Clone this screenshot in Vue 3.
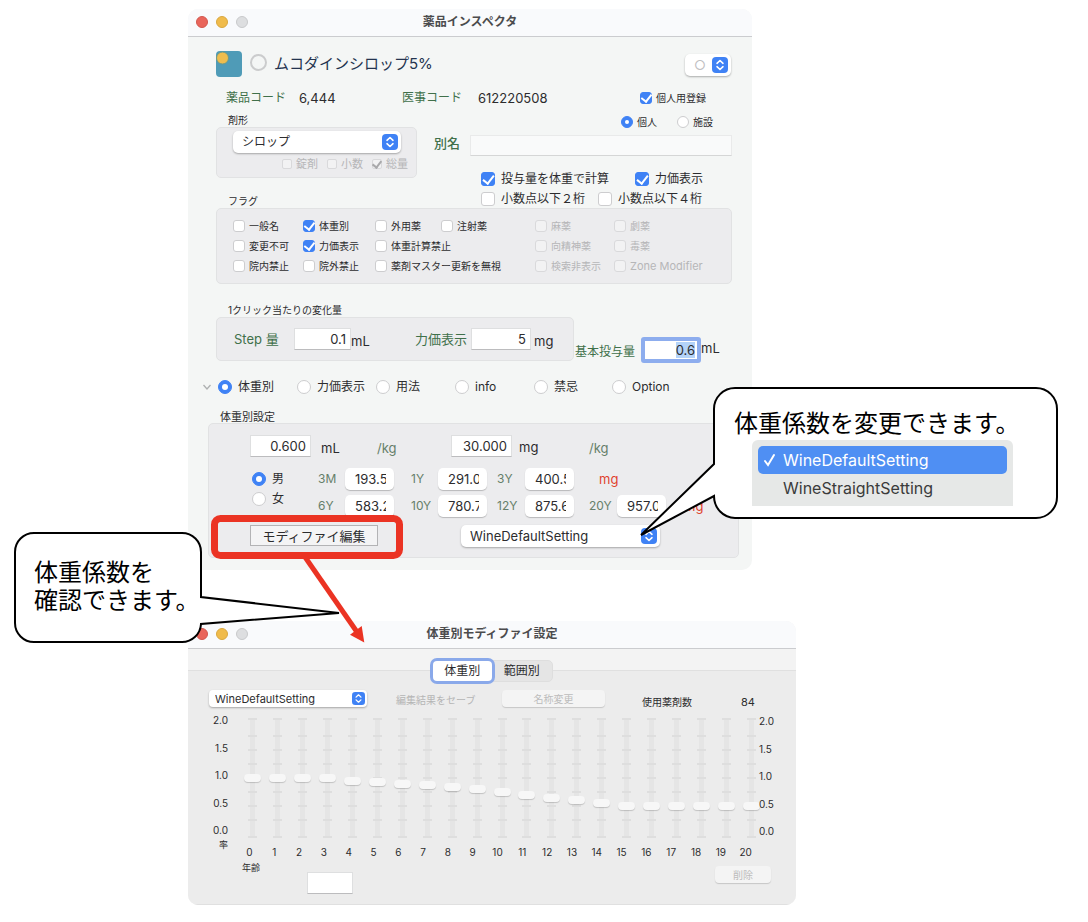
<script setup>
import { ref } from 'vue'

const flags = ref([
  { label: '一般名', col: 1, row: 1 },
  { label: '体重別', col: 2, row: 1, on: true },
  { label: '外用薬', col: 3, row: 1 },
  { label: '注射薬', col: 4, row: 1 },
  { label: '麻薬', col: 5, row: 1, off: true },
  { label: '劇薬', col: 6, row: 1, off: true },
  { label: '変更不可', col: 1, row: 2 },
  { label: '力価表示', col: 2, row: 2, on: true },
  { label: '体重計算禁止', col: 3, row: 2 },
  { label: '向精神薬', col: 5, row: 2, off: true },
  { label: '毒薬', col: 6, row: 2, off: true },
  { label: '院内禁止', col: 1, row: 3 },
  { label: '院外禁止', col: 2, row: 3 },
  { label: '薬剤マスター更新を無視', col: 3, row: 3 },
  { label: '検索非表示', col: 5, row: 3, off: true },
  { label: 'Zone Modifier', col: 6, row: 3, off: true, latin: true },
])

const forms = [
  { label: '錠剤', on: false },
  { label: '小数', on: false },
  { label: '総量', on: true },
]

const panes = ['体重別', '力価表示', '用法', 'info', '禁忌', 'Option']
const pane = ref('体重別')
const owner = ref('個人')
const sex = ref('男')

const doses = [
  { age: '3M', value: '193.5' },
  { age: '1Y', value: '291.0' },
  { age: '3Y', value: '400.5' },
  { age: '6Y', value: '583.2' },
  { age: '10Y', value: '780.7' },
  { age: '12Y', value: '875.6' },
  { age: '20Y', value: '957.0' },
]
const firstDoses = doses.slice(0, 3)
const laterDoses = doses.slice(3)

const axis = ['2.0', '1.5', '1.0', '0.5', '0.0']
const ticks = [1, 18, 32, 46, 60, 74, 88, 102, 119]
const rates = ref([
  1, 1, 1, 1, 0.95, 0.93, 0.89, 0.88, 0.84, 0.8, 0.75, 0.7, 0.64, 0.61, 0.55,
  0.5, 0.5, 0.5, 0.5, 0.5, 0.5,
])
</script>

<template>
  <main class="desktop">
    <section class="window inspector">
      <header class="titlebar">
        <span class="lights"><i class="red"></i><i class="yellow"></i><i></i></span>
        <h1>薬品インスペクタ</h1>
      </header>

      <div class="drug">
        <svg class="drug-icon" width="26" height="26" viewBox="0 0 26 26" aria-hidden="true">
          <rect width="26" height="26" rx="4" fill="#4f9bb7" />
          <circle cx="6.5" cy="7" r="6" fill="#efbd4e" stroke="#6f9a86" stroke-width="1" />
        </svg>
        <span class="ring"></span>
        <h2>ムコダインシロップ5%</h2>
        <span class="pop pop-mark">
          <select aria-label="マーク"><option>○</option></select>
          <svg class="arrows" viewBox="0 0 16 16"><rect width="16" height="16" rx="4" /><path d="M5 6.300 8 3.500l3 2.800M5 9.700l3 2.800 3-2.800" /></svg>
        </span>
      </div>

      <div class="codes">
        <span class="green">薬品コード</span><span class="num">6,444</span>
        <span class="green">医事コード</span><span class="num">612220508</span>
        <label class="check tiny"><input type="checkbox" checked />個人用登録</label>
      </div>

      <div class="middle">
        <div class="form-side">
          <p class="caption">剤形</p>
          <div class="group form-group">
            <span class="pop pop-form">
              <select aria-label="剤形"><option>シロップ</option></select>
              <svg class="arrows" viewBox="0 0 16 16"><rect width="16" height="16" rx="4" /><path d="M5 6.300 8 3.500l3 2.800M5 9.700l3 2.800 3-2.800" /></svg>
            </span>
            <div class="form-checks">
              <label v-for="f in forms" :key="f.label" class="check mini">
                <input type="checkbox" :checked="f.on" disabled />{{ f.label }}
              </label>
            </div>
          </div>
          <p class="caption flag-caption">フラグ</p>
        </div>
        <div class="alias-side">
          <div class="owners">
            <label v-for="o in ['個人', '施設']" :key="o" class="check tiny">
              <input v-model="owner" type="radio" name="owner" :value="o" />{{ o }}
            </label>
          </div>
          <div class="alias">
            <label class="green" for="alias">別名</label>
            <input id="alias" class="field" type="text" />
          </div>
          <div class="options">
            <label class="check big"><input type="checkbox" checked />投与量を体重で計算</label>
            <label class="check big"><input type="checkbox" checked />力価表示</label>
          </div>
          <div class="options digits">
            <label class="check big"><input type="checkbox" />小数点以下２桁</label>
            <label class="check big"><input type="checkbox" />小数点以下４桁</label>
          </div>
        </div>
      </div>

      <div class="group flags">
        <label
          v-for="f in flags"
          :key="f.label"
          class="check tiny"
          :class="['c' + f.col, 'r' + f.row, { latin: f.latin }]"
        >
          <input v-model="f.on" type="checkbox" :disabled="f.off" />{{ f.label }}
        </label>
      </div>

      <p class="caption step-caption">1クリック当たりの変化量</p>
      <div class="steps">
        <div class="group step-group">
          <label class="green step-label" for="step">Step 量</label>
          <input id="step" class="field step-field" type="text" value="0.1" />
          <span class="unit">mL</span>
          <label class="green power-label" for="power">力価表示</label>
          <input id="power" class="field power-field" type="text" value="5" />
          <span class="unit mg">mg</span>
        </div>
        <div class="base">
          <span id="base-label" class="green base-label">基本投与量</span>
          <span class="focus"><span class="base-value" role="textbox" tabindex="0" aria-labelledby="base-label"><mark>0.6</mark></span></span>
          <span class="base-unit">mL</span>
        </div>
      </div>

      <div class="panes">
        <svg class="disclosure" width="8" height="6" viewBox="0 0 8 6" aria-hidden="true"><path d="M.5 1 4 5 7.500 1" /></svg>
        <label v-for="p in panes" :key="p" class="check big">
          <input v-model="pane" type="radio" name="pane" :value="p" />{{ p }}
        </label>
      </div>

      <p class="caption weight-caption">体重別設定</p>
      <div class="group weight">
        <div class="per-kg">
          <input class="field" type="text" value="0.600" aria-label="mL/kg" />
          <span>mL</span><span class="faded">/kg</span>
          <input class="field" type="text" value="30.000" aria-label="mg/kg" />
          <span class="mg-label">mg</span><span class="faded">/kg</span>
        </div>
        <div class="by-age">
          <div class="sexes">
            <label v-for="s in ['男', '女']" :key="s" class="check big">
              <input v-model="sex" type="radio" name="sex" :value="s" />{{ s }}
            </label>
          </div>
          <template v-for="d in firstDoses" :key="d.age">
            <label class="faded" :for="'age' + d.age">{{ d.age }}</label>
            <input :id="'age' + d.age" class="dose" type="text" :value="d.value" />
          </template>
          <span class="warn first-warn">mg</span>
          <template v-for="d in laterDoses" :key="d.age">
            <label class="faded" :for="'age' + d.age">{{ d.age }}</label>
            <input :id="'age' + d.age" class="dose" type="text" :value="d.value" />
          </template>
          <span class="warn">mg</span>
        </div>
        <div class="modify">
          <button class="square-button" type="button">モディファイ編集</button>
          <span class="pop pop-setting">
            <select aria-label="体重係数"><option>WineDefaultSetting</option><option>WineStraightSetting</option></select>
            <svg class="arrows" viewBox="0 0 16 16"><rect width="16" height="16" rx="4" /><path d="M5 6.300 8 3.500l3 2.800M5 9.700l3 2.800 3-2.800" /></svg>
          </span>
        </div>
      </div>
    </section>

    <section class="window modifier">
      <header class="titlebar">
        <span class="lights"><i class="red"></i><i class="yellow"></i><i></i></span>
        <h1>体重別モディファイ設定</h1>
      </header>
      <div class="tabs">
        <button class="active" type="button">体重別</button>
        <button type="button">範囲別</button>
      </div>
      <div class="panel">
        <div class="tools">
          <span class="pop pop-small">
            <select aria-label="設定"><option>WineDefaultSetting</option><option>WineStraightSetting</option></select>
            <svg class="arrows" viewBox="0 0 16 16"><rect width="16" height="16" rx="4" /><path d="M5 6.300 8 3.500l3 2.800M5 9.700l3 2.800 3-2.800" /></svg>
          </span>
          <span class="save">編集結果をセーブ</span>
          <button class="soft-button" type="button" disabled>名称変更</button>
          <span class="count-label">使用薬剤数</span>
          <span class="count">84</span>
        </div>
        <div class="chart">
          <div class="left-axis">
            <div class="axis"><span v-for="a in axis" :key="a">{{ a }}</span></div>
            <span class="rate">率</span>
          </div>
          <div class="plot">
            <div class="sliders">
              <span v-for="(r, i) in rates" :key="i" class="slider">
                <svg width="9" height="120" viewBox="0 0 9 120" aria-hidden="true">
                  <rect x="2" width="5" height="120" rx="2" fill="#e5e5e5" />
                  <path v-for="t in ticks" :key="t" :d="`M0 ${t}h9`" stroke="#dedede" stroke-width="2" />
                </svg>
                <input v-model="rates[i]" type="range" min="0" max="2" step="0.01" :aria-label="i + '歳'" />
              </span>
            </div>
            <div class="ages"><span v-for="(r, i) in rates" :key="i">{{ i }}</span></div>
          </div>
          <div class="axis right-axis"><span v-for="a in axis" :key="a">{{ a }}</span></div>
        </div>
        <div class="bottom">
          <label for="age-entry">年齢</label>
          <input id="age-entry" class="field" type="text" />
          <button class="soft-button" type="button" disabled>削除</button>
        </div>
      </div>
    </section>

    <svg class="marks" width="200" height="136" viewBox="0 0 200 136" aria-hidden="true">
      <rect x="7.500" y="7.500" width="185" height="37" rx="6" fill="none" stroke="#eb3323" stroke-width="7" />
      <path d="M98 46 150 121" stroke="#eb3323" stroke-width="5" />
      <path d="M157.300 131.500 143 123.700 154.700 115z" fill="#eb3323" />
    </svg>

    <aside class="callout confirm">
      <svg width="327" height="112" viewBox="0 0 327 112" aria-hidden="true">
        <path d="M20 2H168a19 19 0 0 1 19 19V66L325 82 187 93a19 19 0 0 1-19 18H20A19 19 0 0 1 1 92V21A19 19 0 0 1 20 2z" />
      </svg>
      <p>体重係数を<br />確認できます。</p>
    </aside>

    <aside class="callout change">
      <svg width="420" height="150" viewBox="0 0 420 150" aria-hidden="true">
        <path d="M95 2H396a21 21 0 0 1 21 21V111a21 21 0 0 1-21 21H95A21 22 0 0 1 74 110L1 149 74 78V23A21 21 0 0 1 95 2z" />
      </svg>
      <p>体重係数を変更できます。</p>
      <ul class="menu">
        <li class="selected">
          <svg width="14" height="14" viewBox="0 0 14 14" aria-hidden="true"><path d="M2 8 5 12 11 2" /></svg>WineDefaultSetting
        </li>
        <li>WineStraightSetting</li>
      </ul>
    </aside>
  </main>
</template>

<style>
body {
  background: #fff;
}
</style>

<style scoped>
* {
  box-sizing: border-box;
}
.desktop {
  position: relative;
  padding: 9px 0 18px 188px;
  color: #2c2c2e;
  font: 12px/16px Inter, "Noto Sans CJK JP", sans-serif;
  white-space: nowrap;
}
h1, h2, p, ul {
  margin: 0;
  padding: 0;
  font-weight: 400;
}
input, select, button {
  margin: 0;
  padding: 0;
  border: 0;
  font: inherit;
  color: inherit;
  outline: none;
}
.window {
  border-radius: 10px;
  overflow: hidden;
}
.inspector {
  max-width: 564px;
  padding-bottom: 12px;
  background: #f4f6f5;
}
.titlebar {
  position: relative;
  padding: 5px 0 6px;
  background: #f9fafc;
  border-bottom: 1px solid #cbcccf;
  text-align: center;
}
.titlebar h1 {
  font-size: 12px;
  font-weight: 700;
  color: #4b4b4d;
}
.lights {
  position: absolute;
  left: 8px;
  top: 7px;
  display: flex;
  gap: 8px;
}
.lights i {
  width: 12px;
  height: 12px;
  border-radius: 50%;
  background: #dddee0;
  border: 1px solid #c8c9cb;
}
.lights .red {
  background: #e9655b;
  border-color: #d2574e;
}
.lights .yellow {
  background: #f0bb4b;
  border-color: #d9a73f;
}
.green {
  color: #40704a;
}
.faded {
  color: #667f6a;
}
.warn {
  color: #e0432f;
}
.caption {
  font-size: 10px;
  line-height: 14px;
}
.group {
  background: #ececee;
  border: 1px solid #e1e2e3;
  border-radius: 5px;
}

.check {
  display: flex;
  align-items: center;
}
.check input {
  appearance: none;
  flex: none;
  display: flex;
  align-items: center;
  justify-content: center;
  background: #fff;
  border: 1px solid #cdcdcf;
  border-radius: 3px;
}
.check input[type="radio"] {
  border-radius: 50%;
}
.check input:checked {
  background: #3f82f5;
  border-color: #3f82f5;
}
.check input[type="checkbox"]:checked::before {
  content: "";
  width: 5px;
  height: 9px;
  margin-bottom: 2px;
  border: solid #fff;
  border-width: 0 2px 2px 0;
  transform: rotate(38deg);
}
.check input[type="radio"]:checked::before {
  content: "";
  width: 4px;
  height: 4px;
  border-radius: 50%;
  background: #fff;
}
.check.tiny input[type="checkbox"]:checked::before {
  width: 5px;
  height: 8px;
}
.check input:disabled {
  background: #f2f2f3;
  border-color: #d9d9db;
}
.check.mini input:disabled:checked::before {
  width: 4px;
  height: 7px;
  border-color: #a9a9ab;
}
.check:has(input:disabled) {
  color: #b6b6b8;
}
.tiny {
  gap: 4px;
  font-size: 10px;
}
.tiny input {
  width: 12px;
  height: 12px;
}
.mini {
  gap: 4px;
  font-size: 11px;
}
.mini input {
  width: 10px;
  height: 10px;
  border-radius: 2px;
}
.big {
  gap: 6px;
}
.big input {
  width: 14px;
  height: 14px;
}
.big input[type="radio"]:checked::before {
  width: 6px;
  height: 6px;
}

.field {
  height: 22px;
  min-width: 0;
  background: #fff;
  border: 1px solid #dedfe0;
  border-bottom-color: #bcbcbe;
  font-size: 13px;
  text-align: right;
  padding-right: 4px;
}
.pop {
  position: relative;
  display: flex;
}
.pop select {
  appearance: none;
  width: 100%;
  height: 22px;
  padding-left: 9px;
  background: #fff;
  border-radius: 5px;
  box-shadow: 0 1px 2px rgba(0, 0, 0, 0.3);
}
.arrows {
  position: absolute;
  right: 3px;
  top: 3px;
  width: 16px;
  height: 16px;
  pointer-events: none;
}
.arrows rect {
  fill: #3f82f5;
}
.arrows path {
  fill: none;
  stroke: #fff;
  stroke-width: 1.6;
  stroke-linecap: round;
  stroke-linejoin: round;
}

.drug {
  display: flex;
  align-items: center;
  padding: 14px 21px 0 28px;
}
.ring {
  width: 17px;
  height: 17px;
  margin: 0 7px 3px 8px;
  border: 2px solid #cbcccd;
  border-radius: 50%;
}
.drug h2 {
  font-size: 15px;
  color: #24344f;
}
.pop-mark {
  width: 46px;
  margin: 2px 0 0 auto;
}
.pop-mark select {
  color: #bfc0c2;
  font-size: 13px;
}
.codes {
  display: grid;
  grid-template-columns: 73px 103px 76px 162px 1fr;
  align-items: center;
  margin: 11px 20px 0 38px;
  line-height: 20px;
}
.num {
  font-size: 13px;
}
.middle {
  display: grid;
  grid-template-columns: 201px 1fr;
  column-gap: 17px;
  margin: 5px 20px 0 28px;
}
.form-side .caption {
  padding-left: 12px;
}
.form-group {
  padding: 3px 8px 5px 16px;
}
.form-side .flag-caption {
  margin-top: 16px;
}
.pop-form {
  margin-right: 7px;
}
.form-checks {
  display: flex;
  justify-content: flex-end;
  gap: 9px;
  margin-top: 3px;
}
.owners {
  display: flex;
  gap: 20px;
  padding-left: 187px;
  line-height: 18px;
}
.alias {
  display: grid;
  grid-template-columns: 36px 1fr;
  margin-top: 4px;
}
.alias label {
  font-size: 13px;
  font-weight: 500;
}
.alias .field {
  height: 21px;
  background: #f9fafa;
  border-color: #e9eaea;
  border-bottom-color: #d5d6d6;
}
.options {
  display: flex;
  gap: 26px;
  margin: 14px 0 0 47px;
  line-height: 18px;
}
.digits {
  gap: 13px;
  margin-top: 2px;
}
.flags {
  display: grid;
  grid-template-columns: 70px 72px 66px 94px 79px 1fr;
  row-gap: 4px;
  margin: 0 20px 0 28px;
  padding: 9px 0 9px 16px;
}
.latin {
  font-size: 11px;
}
.c1 { grid-column: 1; }
.c2 { grid-column: 2; }
.c3 { grid-column: 3; }
.c4 { grid-column: 4; }
.c5 { grid-column: 5; }
.c6 { grid-column: 6; }
.r1 { grid-row: 1; }
.r2 { grid-row: 2; }
.r3 { grid-row: 3; }
.c3, .c5 {
  width: 0;
}

.step-caption {
  margin: 19px 0 0 40px;
}
.steps {
  display: flex;
  align-items: flex-start;
  margin: 0 20px 0 28px;
}
.step-group {
  display: grid;
  grid-template-columns: 60px 57px 64px 56px 60px 42px;
  align-items: center;
  padding: 10px 0 10px 17px;
}
.step-label, .power-label {
  font-size: 13px;
}
.unit {
  font-size: 13px;
  padding-top: 4px;
}
.mg {
  padding-left: 3px;
}
.base {
  display: flex;
  align-items: center;
  margin: 20px 0 0 1px;
}
.base-label {
  padding-top: 3px;
}
.focus {
  width: 60px;
  margin-left: 6px;
  border: 4px solid #8dadee;
  border-radius: 3px;
  background: #fff;
  padding: 1px 2px;
  text-align: right;
}
.base-value {
  display: block;
  font-size: 13px;
}
mark {
  display: inline-block;
  background: #b4d3f9;
  color: inherit;
}
.base-unit {
  font-size: 13px;
  padding-bottom: 4px;
}

.panes {
  display: grid;
  grid-template-columns: 16px 79px 79px 79px 79px 78px 1fr;
  align-items: center;
  margin: 16px 0 0 14px;
}
.disclosure {
  margin-left: 1px;
  fill: none;
  stroke: #aeb0b1;
  stroke-width: 1.3;
}
.weight-caption {
  margin: 16px 0 0 32px;
  font-size: 11px;
  line-height: 12px;
}
.weight {
  margin: 0 13px 0 20px;
  padding: 11px 0 10px 41px;
}
.per-kg {
  display: grid;
  grid-template-columns: 61px 56px 84px 61px 67px 1fr;
  align-items: center;
  font-size: 13px;
}
.per-kg span {
  padding: 4px 0 0 10px;
}
.per-kg .mg-label {
  padding: 2px 0 0 7px;
}
.per-kg .faded {
  font-size: 13px;
}
.by-age {
  display: grid;
  grid-template-columns: 68px 27px 66px 27px 59px 28px 64px 28px 67px 1fr;
  row-gap: 5px;
  align-items: center;
  margin-top: 11px;
}
.sexes {
  grid-row: span 2;
  align-self: start;
  padding: 1px 0 0 2px;
  line-height: 20px;
}
.by-age .faded {
  font-size: 12px;
}
.dose {
  width: 49px;
  height: 22px;
  padding: 0 8px 0 10px;
  background: #fff;
  border-radius: 5px;
  box-shadow: 0 1px 1px rgba(0, 0, 0, 0.22);
  font-size: 13px;
}
.warn {
  font-size: 13px;
}
.first-warn {
  grid-column: 8 / -1;
  padding-left: 10px;
}
.modify {
  display: flex;
  align-items: flex-start;
  gap: 83px;
  margin-top: 8px;
}
.square-button {
  width: 128px;
  height: 21px;
  background: #f4f4f5;
  border: 1px solid #b3b3b5;
  font-size: 13px;
  line-height: 16px;
}
.pop-setting {
  width: 199px;
}
.pop-setting select {
  font-size: 13px;
}

.modifier {
  max-width: 608px;
  margin-top: 51px;
  background: #f3f3f3;
}
.tabs {
  position: relative;
  display: flex;
  width: 121px;
  margin: 11px auto 0;
  background: #e5e5e5;
  border: 1px solid #dedede;
  border-radius: 5px;
}
.tabs button {
  flex: 1;
  height: 20px;
  background: none;
  line-height: 18px;
}
.tabs .active {
  background: #fff;
  border-radius: 4px;
  box-shadow: 0 0 0 3px #8aa9ea;
}
.panel {
  margin-top: -12px;
  padding: 19px 0 10px;
  background: #ececec;
  border: solid #e0e0e0;
  border-width: 1px 0;
}
.tools {
  display: grid;
  grid-template-columns: 187px 106px 140px 99px 1fr;
  height: 20px;
  margin-left: 21px;
  font-size: 10px;
}
.pop-small {
  width: 158px;
  height: 17px;
}
.pop-small select {
  height: 17px;
  padding-left: 6px;
  font-size: 11px;
  border-radius: 4px;
}
.pop-small .arrows {
  top: 2px;
  right: 2px;
  width: 13px;
  height: 13px;
}
.save {
  align-self: center;
  color: #b5b5b5;
}
.soft-button {
  width: 103px;
  height: 17px;
  background: #f4f4f4;
  border-radius: 4px;
  box-shadow: 0 1px 1px rgba(0, 0, 0, 0.16);
  color: #bcbcbc;
  font-size: 10px;
  line-height: 16px;
}
.count-label, .count {
  align-self: end;
}
.count {
  font-size: 11px;
}
.chart {
  display: grid;
  grid-template-columns: 49px 1fr 32px;
  margin-top: 4px;
  font-size: 10px;
  line-height: 12px;
}
.left-axis {
  padding-right: 9px;
  text-align: right;
}
.axis {
  display: flex;
  flex-direction: column;
  justify-content: space-between;
  height: 122px;
}
.rate {
  display: block;
  margin-top: 3px;
  font-size: 9px;
}
.right-axis {
  position: relative;
  margin: 1px 0 0 -5px;
}
.sliders {
  display: flex;
  padding: 4px 0 0 3px;
}
.slider {
  position: relative;
  flex: 1;
  display: flex;
  justify-content: center;
}
.slider input {
  position: absolute;
  top: 0;
  width: 17px;
  height: 120px;
  appearance: none;
  background: none;
  writing-mode: vertical-lr;
  direction: rtl;
}
.slider input::-webkit-slider-thumb {
  appearance: none;
  width: 17px;
  height: 8px;
  border-radius: 4px;
  background: #f7f7f7;
  box-shadow: 0 1px 1px rgba(0, 0, 0, 0.18);
}
.ages {
  display: flex;
  margin-top: 6px;
  padding-right: 6px;
  line-height: 16px;
}
.ages span {
  flex: 1;
  text-align: center;
}
.bottom {
  display: flex;
  align-items: flex-start;
  padding: 2px 25px 0 54px;
  font-size: 9px;
  line-height: 12px;
}
.bottom .field {
  width: 46px;
  margin: 10px 0 0 47px;
}
.bottom .soft-button {
  width: 56px;
  margin: 4px 0 0 auto;
}

.marks {
  position: absolute;
  left: 207px;
  top: 511px;
}
.callout {
  position: absolute;
  color: #000;
  font-size: 24px;
  font-weight: 300;
  line-height: 28px;
}
.callout > svg {
  position: absolute;
  left: 0;
  top: 0;
  fill: #fff;
  stroke: #000;
  stroke-width: 2;
}
.callout p {
  position: relative;
}
.confirm {
  left: 14px;
  top: 531px;
  padding: 28px 0 0 20px;
}
.change {
  left: 640px;
  top: 386px;
  padding: 24px 0 0 94px;
}
.menu {
  position: relative;
  width: 261px;
  margin: 2px 0 0 18px;
  padding: 6px 6px 4px;
  background: #e6e8e7;
  border-radius: 6px 6px 0 0;
  color: #3a3b3b;
  font-size: 16px;
  font-weight: 400;
  list-style: none;
}
.menu li {
  padding-left: 25px;
}
.menu .selected {
  display: flex;
  align-items: center;
  gap: 6px;
  padding-left: 5px;
  background: #4f8ff3;
  border-radius: 5px;
  color: #fff;
}
.menu svg {
  fill: none;
  stroke: #fff;
  stroke-width: 2;
  stroke-linecap: round;
}
</style>
